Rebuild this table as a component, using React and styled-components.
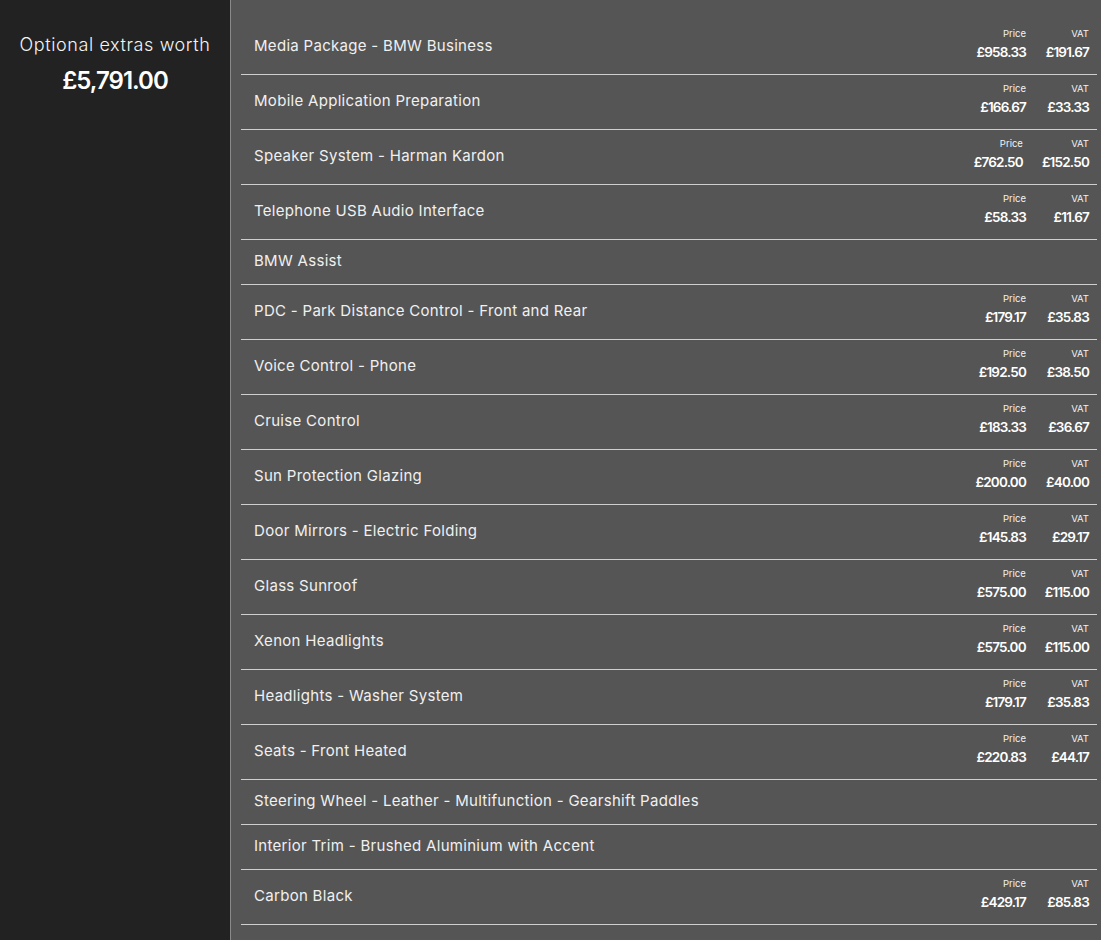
import styled, { createGlobalStyle } from "styled-components";

const GlobalStyle = createGlobalStyle`
  html, body {
    margin: 0;
    padding: 0;
    background: #555555;
  }
  body {
    font-family: Inter, "Noto Sans", "Liberation Sans", sans-serif;
    color: #f2f2f2;
  }
`;

const Page = styled.div`
  display: flex;
  min-height: 940px;
  width: 1101px;
`;

const Sidebar = styled.aside`
  width: 230px;
  flex-shrink: 0;
  background-color: #222222;
  border-right: 1px solid #8a8a8a;
  text-align: center;
  padding-top: 33px;
`;

const WorthLabel = styled.div`
  font-size: 18px;
  font-weight: 300;
  letter-spacing: 0.6px;
  color: #f4f4f4;
  line-height: 24px;
`;

const WorthValue = styled.div`
  font-size: 24px;
  font-weight: 600;
  letter-spacing: -1px;
  color: #ffffff;
  line-height: 30px;
  margin-top: 9px;
`;

const Panel = styled.main`
  flex: 1;
  background-color: #555555;
  padding: 20px 4px 0 10px;
`;

const Row = styled.div`
  display: flex;
  align-items: center;
  justify-content: space-between;
  height: ${(p) => (p.$priced ? "55px" : "45px")};
  border-bottom: 1px solid #cfcfcf;
  box-sizing: border-box;
  padding: 0 8px 0 13px;
`;

const Name = styled.div`
  font-size: 15px;
  font-weight: 400;
  letter-spacing: 0.3px;
  color: #f0f0f0;
  margin-bottom: 3px;
`;

const Prices = styled.div`
  display: flex;
  gap: 19px;
  margin-bottom: 6px;
`;

const PriceCol = styled.div`
  display: flex;
  flex-direction: column;
  align-items: flex-end;
  min-width: ${(p) => p.$w || 50}px;
`;

const PriceLabel = styled.span`
  font-size: 9.5px;
  color: #f2f2f2;
  line-height: 12px;
  margin-bottom: 3px;
`;

const PriceValue = styled.span`
  font-size: 13.5px;
  font-weight: 600;
  letter-spacing: -0.8px;
  color: #ffffff;
  line-height: 18px;
`;

const items = [
  ["Media Package - BMW Business", "£958.33", "£191.67"],
  ["Mobile Application Preparation", "£166.67", "£33.33"],
  ["Speaker System - Harman Kardon", "£762.50", "£152.50"],
  ["Telephone USB Audio Interface", "£58.33", "£11.67"],
  ["BMW Assist"],
  ["PDC - Park Distance Control - Front and Rear", "£179.17", "£35.83"],
  ["Voice Control - Phone", "£192.50", "£38.50"],
  ["Cruise Control", "£183.33", "£36.67"],
  ["Sun Protection Glazing", "£200.00", "£40.00"],
  ["Door Mirrors - Electric Folding", "£145.83", "£29.17"],
  ["Glass Sunroof", "£575.00", "£115.00"],
  ["Xenon Headlights", "£575.00", "£115.00"],
  ["Headlights - Washer System", "£179.17", "£35.83"],
  ["Seats - Front Heated", "£220.83", "£44.17"],
  ["Steering Wheel - Leather - Multifunction - Gearshift Paddles"],
  ["Interior Trim - Brushed Aluminium with Accent"],
  ["Carbon Black", "£429.17", "£85.83"],
];

export default function App() {
  return (
    <Page>
      <GlobalStyle />
      <Sidebar>
        <WorthLabel>Optional extras worth</WorthLabel>
        <WorthValue>£5,791.00</WorthValue>
      </Sidebar>
      <Panel>
        {items.map(([name, price, vat]) => (
          <Row key={name} $priced={!!price}>
            <Name>{name}</Name>
            {price && (
              <Prices>
                <PriceCol $w={50}>
                  <PriceLabel>Price</PriceLabel>
                  <PriceValue>{price}</PriceValue>
                </PriceCol>
                <PriceCol $w={44}>
                  <PriceLabel>VAT</PriceLabel>
                  <PriceValue>{vat}</PriceValue>
                </PriceCol>
              </Prices>
            )}
          </Row>
        ))}
      </Panel>
    </Page>
  );
}
